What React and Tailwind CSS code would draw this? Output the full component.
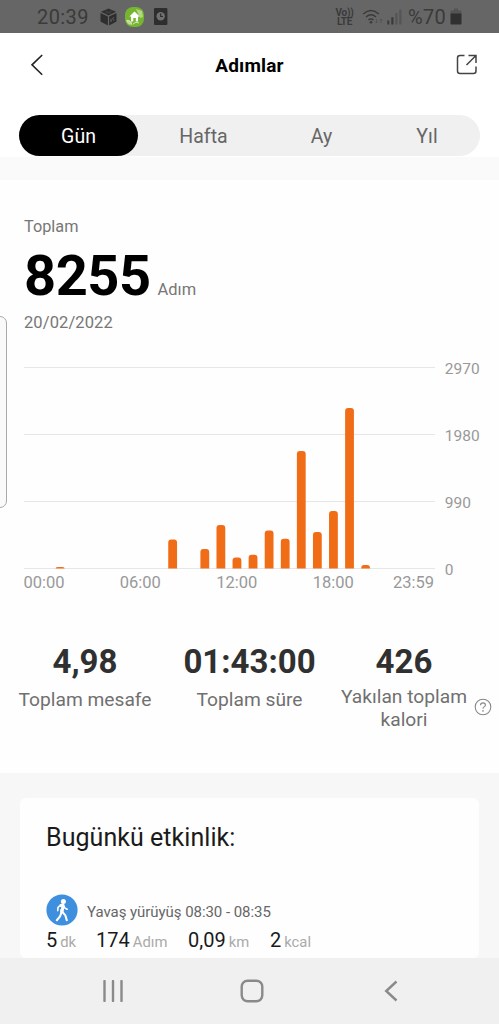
import React, { useState } from "react";

const tabs = [
  { label: "Gün", width: "w-[119px]" },
  { label: "Hafta", width: "w-[131px]" },
  { label: "Ay", width: "w-[105px]" },
  { label: "Yıl", width: "w-[106px]" },
];

// Steps per hour of the day
const hourlySteps = [
  { hour: 1, steps: 22 },
  { hour: 8, steps: 428 },
  { hour: 10, steps: 288 },
  { hour: 11, steps: 642 },
  { hour: 12, steps: 163 },
  { hour: 13, steps: 204 },
  { hour: 14, steps: 561 },
  { hour: 15, steps: 440 },
  { hour: 16, steps: 1735 },
  { hour: 17, steps: 538 },
  { hour: 18, steps: 850 },
  { hour: 19, steps: 2370 },
  { hour: 20, steps: 52 },
];

const yTicks = [2970, 1980, 990, 0];

const xTicks = [
  { label: "00:00", x: 23.5 },
  { label: "06:00", x: 119.7 },
  { label: "12:00", x: 216.3 },
  { label: "18:00", x: 312.8 },
  { label: "23:59", x: 393 },
];

const activityStats = [
  { value: "5", unit: "dk", width: "w-[50px]" },
  { value: "174", unit: "Adım", width: "w-[92px]" },
  { value: "0,09", unit: "km", width: "w-[82px]" },
  { value: "2", unit: "kcal", width: "w-[60px]" },
];

const StatusBar = () => (
  <div className="h-[33px] shrink-0 bg-[#666666] text-[#3a3a3a] flex items-center justify-between pl-[37px] pr-[36px]">
    <div className="flex items-center">
      <span className="w-[63px] text-[20px] leading-[33px] tracking-[0.4px] pt-[2px]">20:39</span>
      {/* Cube */}
      <svg width="17" height="18" viewBox="0 0 17 18">
        <path d="M8.5 0.5L16 3.8L8.5 7.4L1 3.8Z" fill="#2e2e2e" />
        <path d="M0.5 5L7.9 8.5V17.5L0.5 13.6Z" fill="#2e2e2e" />
        <path d="M16.5 5L9.1 8.5V17.5L16.5 13.6Z" fill="#2e2e2e" />
        <path d="M4.5 2.6L12 6M12.5 2.6L5 6" stroke="#4a4a4a" strokeWidth="0.6" />
        <path d="M11 10.8V14M13.8 9.2L12.6 10.8L14 12.6" stroke="#666" strokeWidth="1" fill="none" />
      </svg>
      {/* Home */}
      <svg className="ml-[8px]" width="19" height="20" viewBox="0 0 19 20">
        <rect width="19" height="20" rx="8" fill="#76b52f" />
        <path d="M11 2L17 4L18 10L15 11Z" fill="#b5d689" />
        <path d="M1 13Q4 12 7 16L5 18Q2 17 1 13Z" fill="#b9dc90" />
        <path d="M9.5 4.5L4.3 9.6H6V14.6H8.3V11H10.8V14.6H13.1V9.6H14.7Z" fill="#fff" />
        <path d="M2 14Q6 13 7 18M8 17Q11 14 14 16" stroke="#e4f2d2" strokeWidth="0.8" fill="none" />
      </svg>
      {/* Clock card */}
      <svg className="ml-[10px]" width="14" height="17" viewBox="0 0 14 17">
        <rect width="13.4" height="17" rx="1" fill="#2e2e2e" />
        <circle cx="6.7" cy="8.3" r="4.2" fill="#707070" />
        <path d="M6.7 5.6V8.5H9" stroke="#2e2e2e" strokeWidth="1.2" fill="none" />
      </svg>
    </div>
    <div className="flex items-center">
      <div className="w-[19px] text-[10px] leading-[9px] font-bold text-center whitespace-nowrap tracking-[-0.3px]">
        <div>Vo))</div>
        <div>LTE</div>
      </div>
      {/* Wifi */}
      <svg className="ml-[8px]" width="24" height="16" viewBox="0 0 24 16">
        <path d="M1.2 5Q9 -2 16.8 5" stroke="#3a3a3a" strokeWidth="1.5" fill="none" />
        <path d="M4 8Q9 3.6 14 8" stroke="#3a3a3a" strokeWidth="1.5" fill="none" />
        <path d="M6.5 10.8Q9 9 11.5 10.8" stroke="#3a3a3a" strokeWidth="1.5" fill="none" />
        <circle cx="9" cy="13.2" r="1.3" fill="#3a3a3a" />
        <path d="M14.5 10V14M13 12.5L14.5 14L16 12.5M19 14V10M17.5 11.5L19 10L20.5 11.5" stroke="#505050" strokeWidth="0.8" fill="none" />
      </svg>
      {/* Signal */}
      <svg className="ml-px" width="15" height="16" viewBox="0 0 15 16">
        <rect x="0.3" y="11.5" width="2" height="4" fill="#3a3a3a" />
        <rect x="4.3" y="8.3" width="2.2" height="7.2" fill="#3a3a3a" />
        <rect x="8.3" y="4" width="2.2" height="11.5" fill="#555555" />
        <rect x="12.3" y="0.5" width="2.2" height="15" fill="#555555" />
      </svg>
      <span className="ml-[6px] w-[41px] text-[20px] leading-[33px] tracking-[0.3px] pt-[2px]">%70</span>
      {/* Battery */}
      <svg className="ml-px mr-px" width="12" height="17" viewBox="0 0 12 17">
        <path d="M4 0.5H8V2.5H10.5Q11.5 2.5 11.5 3.5V6H0.5V3.5Q0.5 2.5 1.5 2.5H4Z" fill="#545454" />
        <path d="M0.5 5.5H11.5V15.5Q11.5 16.5 10.5 16.5H1.5Q0.5 16.5 0.5 15.5Z" fill="#303030" />
      </svg>
    </div>
  </div>
);

const Header = () => (
  <div className="h-[64px] flex items-center justify-between pl-[30px] pr-[21px]">
    <button aria-label="Geri" className="w-[13px]">
      <svg className="max-w-none" width="14" height="22" viewBox="0 0 14 22">
        <path d="M12.2 1L2 10.8L12.2 20.8" stroke="#222" strokeWidth="1.6" fill="none" />
      </svg>
    </button>
    <h1 className="text-[19px] font-bold text-black leading-[62px] pt-[2px] tracking-[0.15px]">Adımlar</h1>
    <button aria-label="Paylaş">
      <svg className="-mt-[2px]" width="22" height="21" viewBox="0 0 22 21">
        <path d="M8.5 1.5H4Q1.5 1.5 1.5 4V17Q1.5 19.5 4 19.5H17.5Q20 19.5 20 17V12.5" stroke="#444" strokeWidth="1.5" fill="none" />
        <path d="M12.5 1.5H20V9M20 1.5L10.5 11" stroke="#444" strokeWidth="1.5" fill="none" />
      </svg>
    </button>
  </div>
);

const StepsChart = () => {
  const base = 208.5;
  return (
    <svg className="block" width="499" height="240" viewBox="0 0 499 240" fontFamily="Roboto">
      {yTicks.map((tick) => {
        const y = base - (tick / 2970) * 201;
        return (
          <g key={tick}>
            <line x1="24" x2="435" y1={y} y2={y} stroke="#e6e6e6" strokeWidth="1" />
            <text x="444.8" y={y + 6} fontSize="15.5" fill="#999999">
              {tick}
            </text>
          </g>
        );
      })}
      {hourlySteps.map(({ hour, steps }) => {
        const x = 39.6 + hour * 16.08;
        const h = (steps / 2970) * 201;
        const r = Math.min(3, h);
        return (
          <path
            key={hour}
            d={`M${x} ${base}v${-(h - r)}q0 ${-r} 3 ${-r}h2.8q3 0 3 ${r}v${h - r}z`}
            fill="#f16c16"
          />
        );
      })}
      {xTicks.map(({ label, x }) => (
        <text key={label} x={x} y="227.5" fontSize="16.5" fill="#999999">
          {label}
        </text>
      ))}
    </svg>
  );
};

const Total = ({ value, children, className }) => (
  <div className={`text-center ${className}`}>
    <div className="text-[33px] leading-[40px] font-bold text-[#303030]">{value}</div>
    {children}
  </div>
);

const NavBar = () => (
  <div className="h-[66px] shrink-0 bg-[#f0f0f0] flex items-center pl-[102px]">
    <svg width="22" height="22" viewBox="0 0 22 22">
      <path d="M2.5 1V21M11 1V21M19.5 1V21" stroke="#8a8a8a" strokeWidth="2.4" strokeLinecap="round" />
    </svg>
    <svg className="ml-[116px]" width="24" height="24" viewBox="0 0 24 24">
      <rect x="1.7" y="1.7" width="20.6" height="20.6" rx="6" stroke="#8a8a8a" strokeWidth="2.4" fill="none" />
    </svg>
    <svg className="ml-[120px]" width="14" height="22" viewBox="0 0 14 22">
      <path d="M12.5 1.5L2.2 11L12.5 20.5" stroke="#8a8a8a" strokeWidth="2.4" fill="none" />
    </svg>
  </div>
);

const App = () => {
  const [activeTab, setActiveTab] = useState("Gün");

  return (
    <div className="relative w-[499px] h-[1024px] overflow-hidden flex flex-col bg-[#f7f7f7] font-['Roboto',sans-serif]">
      <StatusBar />

      {/* Header and period tabs */}
      <div className="h-[124px] shrink-0 bg-white">
        <Header />
        <div className="mt-[18px] ml-[19px] w-[461px] h-[41px] rounded-full bg-[#f0f0f0] flex">
          {tabs.map(({ label, width }) => (
            <button
              key={label}
              onClick={() => setActiveTab(label)}
              className={`${width} h-[41px] rounded-full text-[19.5px] leading-[41px] pt-px ${
                activeTab === label ? "bg-black text-white" : "text-[#666666]"
              }`}
            >
              {label}
            </button>
          ))}
        </div>
      </div>

      <div className="h-[23px] shrink-0 bg-[#fafafa]" />

      {/* Daily summary */}
      <div className="h-[593px] shrink-0 bg-[#fefefe]">
        <div className="h-[180px] pt-[37px] pl-[24px] text-[#777777]">
          <div className="text-[16.3px] leading-[20px]">Toplam</div>
          <div className="h-[75px] flex items-baseline">
            <span className="text-[56px] leading-[78px] font-bold text-black tracking-[-0.5px]">8255</span>
            <span className="ml-[7px] text-[16.5px]">Adım</span>
          </div>
          <div className="text-[16.5px] leading-[20px] mt-[1px] tracking-[0.1px]">20/02/2022</div>
        </div>

        <StepsChart />

        {/* Totals */}
        <div className="pt-[42px] pl-[5px] flex text-[19.2px] text-[#707070]">
          <Total value="4,98" className="w-[160px]">
            <div className="leading-[23px] mt-[6px]">Toplam mesafe</div>
          </Total>
          <Total value="01:43:00" className="w-[169px]">
            <div className="leading-[23px] mt-[6px]">Toplam süre</div>
          </Total>
          <Total value="426" className="w-[140px]">
            <div className="leading-[23px] mt-[3px]">
              Yakılan toplam
              <br />
              kalori
            </div>
          </Total>
          <svg className="mt-[56px]" width="18" height="18" viewBox="0 0 18 18">
            <circle cx="9" cy="9" r="7.8" stroke="#888" strokeWidth="1.1" fill="none" />
            <path d="M6.5 7.2Q6.6 4.9 9 4.9Q11.4 4.9 11.4 7Q11.4 8.1 10.1 8.9Q9 9.6 9 10.8" stroke="#888" strokeWidth="1.1" fill="none" />
            <circle cx="9" cy="12.9" r="0.8" fill="#888" />
          </svg>
        </div>
      </div>

      {/* Today's activity */}
      <div className="h-[185px] shrink-0 pt-[25px] px-[20px]">
        <div className="h-[160px] bg-[#fefefe] rounded-md pl-[26px] pt-[25px]">
          <h2 className="text-[25px] leading-[30px] text-[#1a1a1a] tracking-[0.05px]">Bugünkü etkinlik:</h2>
          <div className="mt-[41px] h-[32px] flex items-center">
            <svg width="32" height="32" viewBox="0 0 32 32">
              <circle cx="16" cy="16" r="15.6" fill="#3f8fdf" />
              <circle cx="17.4" cy="7.5" r="2.5" fill="#fff" />
              <path d="M13.8 11.6L17 11L16.2 17.6" stroke="#fff" strokeWidth="3" strokeLinejoin="round" fill="none" />
              <path d="M14.2 11.5L12 13.5L11.7 16.6" stroke="#fff" strokeWidth="1.6" strokeLinecap="round" fill="none" />
              <path d="M17.6 11.6L19 14.2L21.2 15.2" stroke="#fff" strokeWidth="1.6" strokeLinecap="round" fill="none" />
              <path d="M15.2 16V19.4L13.8 22.8L10.8 26.2" stroke="#fff" strokeWidth="2.1" strokeLinecap="round" fill="none" />
              <path d="M16 17.5L19.4 21.4L20.8 26.2" stroke="#fff" strokeWidth="2.1" strokeLinecap="round" fill="none" />
            </svg>
            <span className="ml-[9px] pt-[4px] text-[15px] tracking-[-0.05px] text-[#666666]">
              Yavaş yürüyüş 08:30 - 08:35
            </span>
          </div>
          <div className="flex">
            {activityStats.map(({ value, unit, width }) => (
              <div key={unit} className={`${width} flex items-baseline whitespace-nowrap`}>
                <span className="text-[20px] leading-[28px] text-[#1a1a1a]">{value}</span>
                <span className="ml-[3px] text-[14.8px] text-[#aaaaaa]">{unit}</span>
              </div>
            ))}
          </div>
        </div>
      </div>

      <NavBar />

      {/* Edge panel handle */}
      <div className="absolute left-[-10px] top-[316px] w-[17px] h-[192px] rounded-[7px] border border-[#aaaaaa] bg-[#fafafa]" />
    </div>
  );
};

export default App;
